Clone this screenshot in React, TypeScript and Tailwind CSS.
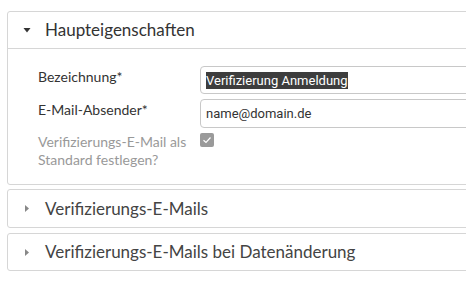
import React from "react";

const Caret = ({ open }: { open?: boolean }) =>
  open ? (
    <svg width="8" height="5" viewBox="0 0 8 5" className="shrink-0">
      <path d="M0.5 0 L7.5 0 L4 4.5 Z" fill="#333" />
    </svg>
  ) : (
    <svg width="4" height="7" viewBox="0 0 4 7" className="shrink-0">
      <path d="M0 0 L4 3.5 L0 7 Z" fill="#888" />
    </svg>
  );

export default function App() {
  const font = { fontFamily: "Lato, 'Open Sans', sans-serif" };
  const inputFont = { fontFamily: "Roboto, 'Open Sans', sans-serif" };
  return (
    <div className="w-[466px] h-[290px] overflow-hidden bg-white" style={font}>
      <div className="pt-[11px] pl-[7px] flex flex-col w-[490px]">
        {/* Panel 1 */}
        <div className="border border-[#d6d6d6] rounded-[3px]">
          <div className="h-[37px] flex items-center border-b border-[#d6d6d6]">
            <div className="w-[37px] flex justify-center">
              <Caret open />
            </div>
            <span className="text-[17px] text-[#333]">Haupteigenschaften</span>
          </div>
          <div className="pl-[30px] pt-[17px] pb-[15px] flex flex-col gap-[5px]">
            <div className="flex">
              <div className="w-[162px] text-[14px] text-[#333] pt-[2px] leading-[18px]">Bezeichnung*</div>
              <div className="flex-1 h-[28px] border border-[#c8c8c8] rounded-[4px] flex items-center pl-[5px]">
                <span className="bg-[#3d3d3d] text-white text-[13px] leading-[17px]" style={inputFont}>
                  Verifizierung Anmeldung
                </span>
              </div>
            </div>
            <div className="flex">
              <div className="w-[162px] text-[14px] text-[#333] pt-[2px] leading-[18px]">E-Mail-Absender*</div>
              <div className="flex-1 h-[29px] border border-[#c8c8c8] rounded-[4px] flex items-center pl-[5px]">
                <span className="text-[#333] text-[13px]" style={inputFont}>
                  name@domain.de
                </span>
              </div>
            </div>
            <div className="flex">
              <div className="w-[162px] text-[14px] text-[#999] leading-[18px]">
                Verifizierungs-E-Mail als
                <br />
                Standard festlegen?
              </div>
              <div className="w-[14px] h-[14px] rounded-[2px] bg-[#9a9a9a] flex items-center justify-center">
                <svg width="10" height="8" viewBox="0 0 10 8">
                  <path d="M1.5 4.2 L4 6.5 L8.5 1.5" stroke="#fff" strokeWidth="1.2" fill="none" />
                </svg>
              </div>
            </div>
          </div>
        </div>
        {/* Panel 2 */}
        <div className="mt-[4px] h-[39px] border border-[#d6d6d6] rounded-[3px] flex items-center">
          <div className="w-[37px] flex justify-center">
            <Caret />
          </div>
          <span className="text-[17px] text-[#444]">Verifizierungs-E-Mails</span>
        </div>
        {/* Panel 3 */}
        <div className="mt-[5px] h-[38px] border border-[#d6d6d6] rounded-[3px] flex items-center">
          <div className="w-[37px] flex justify-center">
            <Caret />
          </div>
          <span className="text-[17px] text-[#444]">Verifizierungs-E-Mails bei Datenänderung</span>
        </div>
      </div>
    </div>
  );
}
